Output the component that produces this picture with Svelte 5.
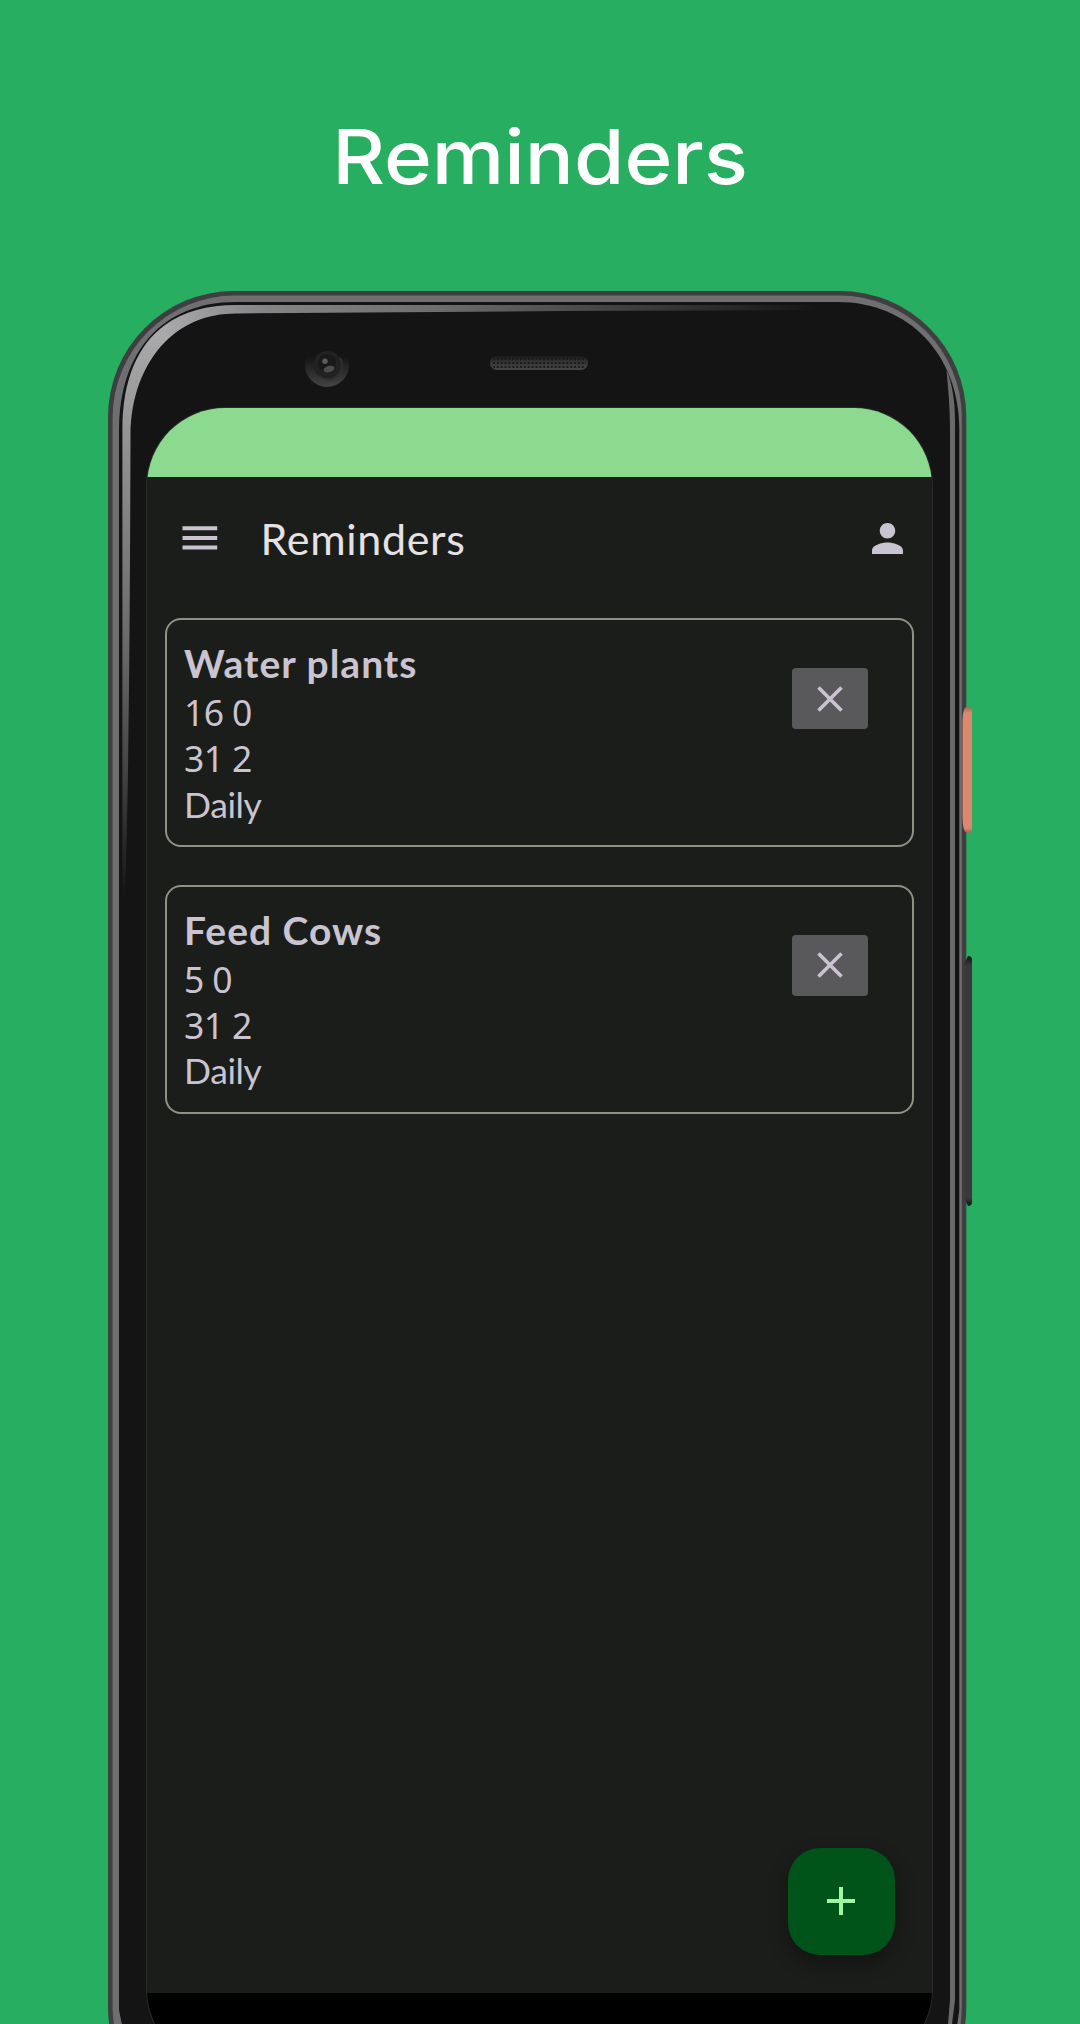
<script>
  const reminders = [
    { title: 'Water plants', time: '16 0', date: '31 2', repeat: 'Daily' },
    { title: 'Feed Cows', time: '5 0', date: '31 2', repeat: 'Daily' }
  ];
</script>

<main class="poster">
  <svg class="device" viewBox="0 0 1080 2024" aria-hidden="true">
    <defs>
      <linearGradient id="shine" gradientUnits="userSpaceOnUse" x1="165" y1="335" x2="165" y2="900">
        <stop offset="0" stop-color="#a9a9ab" />
        <stop offset="0.3" stop-color="#858585" />
        <stop offset="0.55" stop-color="#696969" />
        <stop offset="0.75" stop-color="#484848" />
        <stop offset="1" stop-color="#141414" />
      </linearGradient>
      <linearGradient id="shineTop" gradientUnits="userSpaceOnUse" x1="165" y1="0" x2="820" y2="0">
        <stop offset="0" stop-color="#a9a9ab" />
        <stop offset="0.15" stop-color="#858587" />
        <stop offset="0.4" stop-color="#707070" />
        <stop offset="0.7" stop-color="#404040" />
        <stop offset="1" stop-color="#141414" />
      </linearGradient>
      <linearGradient id="fadeDown" x1="0" y1="0" x2="0" y2="1">
        <stop offset="0.3" stop-color="#141414" />
        <stop offset="1" stop-color="#444" />
      </linearGradient>
      <linearGradient id="grille" x1="0" y1="0" x2="0" y2="1">
        <stop offset="0" stop-color="#1a1a1a" />
        <stop offset="0.4" stop-color="#333" />
        <stop offset="1" stop-color="#474747" />
      </linearGradient>
      <linearGradient id="power" x1="0" y1="0" x2="0" y2="1">
        <stop offset="0" stop-color="#9a6657" />
        <stop offset="0.05" stop-color="#dc886f" />
        <stop offset="0.96" stop-color="#dc886f" />
        <stop offset="1" stop-color="#9a6657" />
      </linearGradient>
      <linearGradient id="volume" x1="0" y1="0" x2="0" y2="1">
        <stop offset="0.01" stop-color="#1d1d1d" />
        <stop offset="0.04" stop-color="#3a3a3a" />
        <stop offset="0.97" stop-color="#3a3a3a" />
        <stop offset="0.99" stop-color="#1d1d1d" />
      </linearGradient>
      <pattern id="mesh" x="492" y="357" width="3.86" height="4" patternUnits="userSpaceOnUse">
        <rect x="1" y="1" width="2" height="2" fill="#1a1a1a" />
      </pattern>
      <clipPath id="topSide"><rect x="165" y="300" width="700" height="60" /></clipPath>
      <clipPath id="leftSide"><rect x="115" y="300" width="50" height="620" /></clipPath>
    </defs>

    <rect x="108" y="291" width="858.3" height="1842" rx="126" fill="#3f3f41" />
    <rect x="112.6" y="295.6" width="849.2" height="1833" rx="122" fill="#6f6f71" />
    <path d="M119 2010V430C119 352 162 302 236 302H838C908 302 959.3 354 959.3 430V2010L955 2040H125Z" fill="#141414" />
    <path d="M122.4 900V430C122.4 347 164 305 236 305H840V310L560 311L236 313.5C170 313.5 131 368 130.5 435C130 600 129 780 125 900Z" fill="url(#shine)" clip-path="url(#leftSide)" />
    <path d="M122.4 900V430C122.4 347 164 305 236 305H840V310L560 311L236 313.5C170 313.5 131 368 130.5 435C130 600 129 780 125 900Z" fill="url(#shineTop)" clip-path="url(#topSide)" />
    <path d="M946.5 370C952 383 955 400 955 420V2000L952 2024H948L950 2000V430C950 405 948 388 946.5 370Z" fill="#69696a" />

    <path d="M968 706.5Q972 706.5 972 709V830Q972 833 968 833C964 833 962.5 827 962.5 815V724C962.5 712 964 706.5 968 706.5Z" fill="url(#power)" />
    <path d="M968 956Q972 956 972 960V1202Q972 1206 968 1206L964 1198V964Z" fill="url(#volume)" />

    <circle cx="327" cy="365" r="22" fill="url(#fadeDown)" />
    <circle cx="327.5" cy="365" r="14" fill="#222" />
    <path d="M340 358A14 14 0 0 1 319 376" fill="none" stroke="#303030" stroke-width="2" />
    <circle cx="327" cy="363" r="9" fill="#191919" />
    <ellipse cx="329" cy="369" rx="5.5" ry="3.2" fill="#4c4c4e" transform="rotate(-18 329 369)" />
    <circle cx="325" cy="361.3" r="2.7" fill="#5c5c5e" />

    <rect x="490" y="356" width="98" height="14" rx="7" fill="url(#grille)" />
    <rect x="492" y="357" width="94" height="12" rx="6" fill="url(#mesh)" />
  </svg>

  <h1>Reminders</h1>

  <section class="screen">
    <div class="status"></div>
    <header>
      <svg class="menu" viewBox="0 0 36 24" aria-label="Menu"><path d="M.5 2.3h34.7M.5 12h34.7M.5 21.6h34.7" /></svg>
      <h2>Reminders</h2>
      <svg class="person" viewBox="4 4 16 16" aria-label="Account"><path d="M12 12c2.21 0 4-1.79 4-4s-1.79-4-4-4-4 1.79-4 4 1.79 4 4 4zm0 2c-2.67 0-8 1.34-8 4v2h16v-2c0-2.66-5.33-4-8-4z" /></svg>
    </header>

    <div class="list">
      {#each reminders as item}
        <article>
          <div class="info">
            <h3>{item.title}</h3>
            <p class="digits">{item.time}</p>
            <p class="digits">{item.date}</p>
            <p>{item.repeat}</p>
          </div>
          <button class="remove" aria-label="Remove">
            <svg viewBox="0 0 26 26"><path d="M1.5 1.5l23 23M24.5 1.5l-23 23" /></svg>
          </button>
        </article>
      {/each}
    </div>

    <button class="fab" aria-label="Add reminder">
      <svg viewBox="0 0 28 28"><path d="M14 0v28M0 14h28" /></svg>
    </button>
    <div class="nav"></div>
  </section>
</main>

<style>
  .poster {
    position: relative;
    width: 1080px;
    height: 2024px;
    overflow: hidden;
    background: #28ae61;
    font-family: Lato, sans-serif;
  }
  .device {
    position: absolute;
    inset: 0;
    width: 1080px;
    height: 2024px;
  }
  h1, h2, h3, p { margin: 0; }
  h1 {
    position: relative;
    height: 408px;
    padding-top: 112px;
    box-sizing: border-box;
    text-align: center;
    color: #fff;
    font: 500 75px/90px Inter, sans-serif;
    transform: scaleX(1.088);
  }
  .screen {
    position: relative;
    display: flex;
    flex-direction: column;
    width: 785px;
    height: 1659px;
    margin-left: 147px;
    box-sizing: border-box;
    overflow: hidden;
    border-radius: 78px;
    background: #1b1d1a;
    box-shadow: 0 0 0 1px #292a29;
    color: #cac4d0;
  }
  .status {
    flex: none;
    height: 68.5px;
    background: #8bda8f;
  }
  header {
    display: flex;
    align-items: center;
    height: 123px;
    padding: 0 29.5px 0 34.5px;
    flex: none;
  }
  .menu { width: 36px; height: 24px; }
  .menu path { stroke: #cac4d0; stroke-width: 4; }
  h2 {
    flex: 1;
    margin-left: 43px;
    padding-top: 2px;
    color: #e6e1e5;
    font-size: 43px;
    font-weight: 400;
    line-height: 52px;
    letter-spacing: 0.7px;
  }
  .person { width: 31px; height: 31px; }
  .person path { fill: #cac4d0; }
  .list {
    display: flex;
    flex-direction: column;
    gap: 37.5px;
    padding: 18.5px 18px 0;
  }
  article {
    display: flex;
    justify-content: space-between;
    align-items: flex-start;
    height: 229px;
    box-sizing: border-box;
    border: 2px solid #8b9286;
    border-radius: 16px;
    padding: 18px 44.5px 0 17px;
  }
  h3 {
    font-size: 39px;
    line-height: 51px;
    font-weight: 700;
    letter-spacing: 1px;
  }
  p {
    font-size: 35.5px;
    line-height: 46.3px;
    letter-spacing: -0.4px;
  }
  .digits {
    font-family: "Noto Sans", sans-serif;
    letter-spacing: -0.6px;
  }
  button {
    display: flex;
    align-items: center;
    justify-content: center;
    border: 0;
    padding: 0;
  }
  .remove {
    width: 76px;
    height: 61px;
    margin-top: 30px;
    border-radius: 4px;
    background: #59595b;
  }
  .remove svg { width: 26px; height: 26px; }
  .remove path { stroke: #cac4d0; stroke-width: 3.6; }
  .fab {
    align-self: flex-end;
    flex: none;
    width: 107.5px;
    height: 107.5px;
    margin: auto 37px 38px 0;
    border-radius: 32px;
    background: #005319;
    box-shadow: 0 8px 20px rgb(0 0 0 / 0.3);
  }
  .fab svg { width: 28px; height: 28px; }
  .fab path { stroke: #9df8a2; stroke-width: 4; }
  .nav {
    flex: none;
    height: 74px;
    background: #000;
  }
</style>
